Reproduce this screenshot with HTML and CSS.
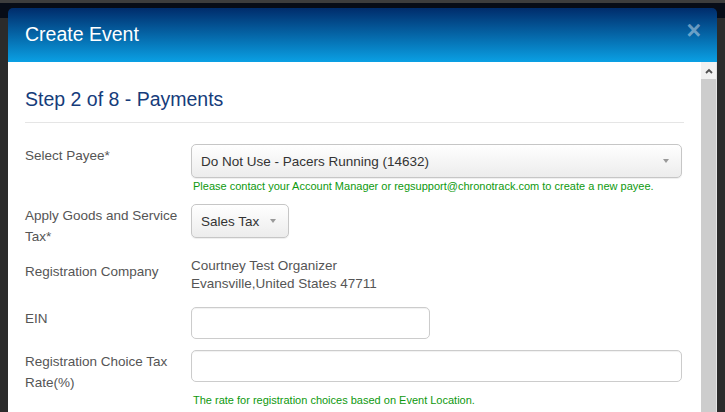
FILE: index.html
```html
<!DOCTYPE html>
<html lang="en">
<head>
    <meta charset="UTF-8">
    <title>Create Event</title>
    <link rel="stylesheet" href="styles.css">
</head>
<body>

<div class="modal">
    <div class="modal-header">
        <h1>Create Event</h1>
        <button class="close" type="button">&times;</button>
    </div>

    <div class="modal-main">
        <div class="modal-body">
            <h2 class="step-title">Step 2 of 8 - Payments</h2>

            <form class="form-horizontal">
                <div class="form-row">
                    <label class="form-label" for="payee">Select Payee*</label>
                    <div class="form-field">
                        <div class="select-wrap select-wide">
                            <select id="payee">
                                <option>Do Not Use - Pacers Running (14632)</option>
                            </select>
                        </div>
                        <p class="help">Please contact your Account Manager or regsupport@chronotrack.com to create a new payee.</p>
                    </div>
                </div>

                <div class="form-row">
                    <label class="form-label" for="gst">Apply Goods and Service Tax*</label>
                    <div class="form-field">
                        <div class="select-wrap select-small">
                            <select id="gst">
                                <option>Sales Tax</option>
                            </select>
                        </div>
                    </div>
                </div>

                <div class="form-row">
                    <label class="form-label label-static">Registration Company</label>
                    <div class="form-field static-value">
                        Courtney Test Organizer<br>
                        Evansville,United States 47711
                    </div>
                </div>

                <div class="form-row row-input">
                    <label class="form-label" for="ein">EIN</label>
                    <div class="form-field">
                        <input type="text" id="ein" class="input-mid">
                    </div>
                </div>

                <div class="form-row">
                    <label class="form-label" for="taxrate">Registration Choice Tax Rate(%)</label>
                    <div class="form-field">
                        <input type="text" id="taxrate" class="input-wide">
                        <p class="help help-spaced">The rate for registration choices based on Event Location.</p>
                    </div>
                </div>
            </form>
        </div>

        <div class="scrollbar">
            <div class="scroll-up">
                <svg width="8" height="6" viewBox="0 0 8 6"><path d="M1 5 L4 2 L7 5" fill="none" stroke="#505050" stroke-width="1.8"/></svg>
            </div>
        </div>
    </div>
</div>

</body>
</html>
```

FILE: styles.css
```css
html, body {
    height: 100%;
}
body {
    margin: 0;
    overflow: hidden;
    font-family: "Liberation Sans", Arial, sans-serif;
    background: linear-gradient(#3d3d3d 0, #3d3d3d 3px, #070c17 3px, #070c17 18px, #2b2b2b 18px);
}
.modal {
    margin: 8px 0 0 8px;
    width: 709px;
    height: calc(100% - 8px);
    display: flex;
    flex-direction: column;
}
.modal-header {
    height: 54px;
    box-sizing: border-box;
    padding: 14px 16px 0 17px;
    display: flex;
    justify-content: space-between;
    align-items: flex-start;
    background: linear-gradient(#002c6b, #0aa0e4);
    border-radius: 5px 5px 0 0;
}
.modal-header h1 {
    margin: 0;
    font-size: 19.5px;
    line-height: 24px;
    font-weight: normal;
    color: #fff;
}
.close {
    background: none;
    border: 0;
    padding: 0;
    margin-top: -4px;
    font-family: "Liberation Sans", Arial, sans-serif;
    font-size: 25px;
    font-weight: bold;
    line-height: 1;
    color: rgba(255, 255, 255, 0.42);
}
.modal-main {
    flex: 1;
    display: flex;
    min-height: 0;
    background: #fff;
}
.modal-body {
    flex: 1;
    padding: 0 17px;
}
.scrollbar {
    width: 15px;
    background: #cdcdcd;
    border-right: 1px solid #e4e4e4;
}
.scroll-up {
    height: 17px;
    background: #f1f1f1;
    display: flex;
    align-items: center;
    justify-content: center;
}
.step-title {
    margin: 25px 0 21px;
    padding-bottom: 11px;
    border-bottom: 1px solid #e5e5e5;
    font-size: 19.5px;
    line-height: 24px;
    font-weight: normal;
    color: #163c7b;
}
.form-row {
    display: flex;
    margin-bottom: 10px;
}
.row-input {
    margin-bottom: 11px;
}
.form-label {
    width: 166px;
    flex: none;
    padding-top: 1px;
    font-size: 13.5px;
    line-height: 21px;
    color: #555;
}
.label-static {
    padding-top: 4px;
}
.form-field {
    flex: 1;
}
.static-value {
    font-size: 13.5px;
    line-height: 18px;
    color: #555;
    padding-bottom: 4px;
}
.select-wrap {
    position: relative;
}
.select-wrap::after {
    content: "";
    position: absolute;
    right: 13px;
    top: 15px;
    border-left: 3px solid transparent;
    border-right: 3px solid transparent;
    border-top: 4px solid #999;
}
.select-wrap select {
    appearance: none;
    -webkit-appearance: none;
    width: 100%;
    height: 34px;
    padding: 0 9px;
    border: 1px solid #c6c6c6;
    border-radius: 5px;
    background: linear-gradient(#fff, #ececec);
    box-shadow: 0 1px 1px rgba(0, 0, 0, 0.07);
    font-family: "Liberation Sans", Arial, sans-serif;
    font-size: 13.5px;
    color: #333;
}
.select-wide {
    width: 491px;
}
.select-small {
    width: 98px;
}
input {
    box-sizing: border-box;
    height: 32px;
    border: 1px solid #ccc;
    border-radius: 5px;
    box-shadow: inset 0 1px 1px rgba(0, 0, 0, 0.06);
    padding: 0 9px;
    display: block;
}
.input-mid {
    width: 239px;
}
.input-wide {
    width: 491px;
}
.help {
    margin: 1px 0 0 2px;
    font-size: 11px;
    line-height: 15px;
    color: #0e990e;
}
.help-spaced {
    margin-top: 11px;
}
```
